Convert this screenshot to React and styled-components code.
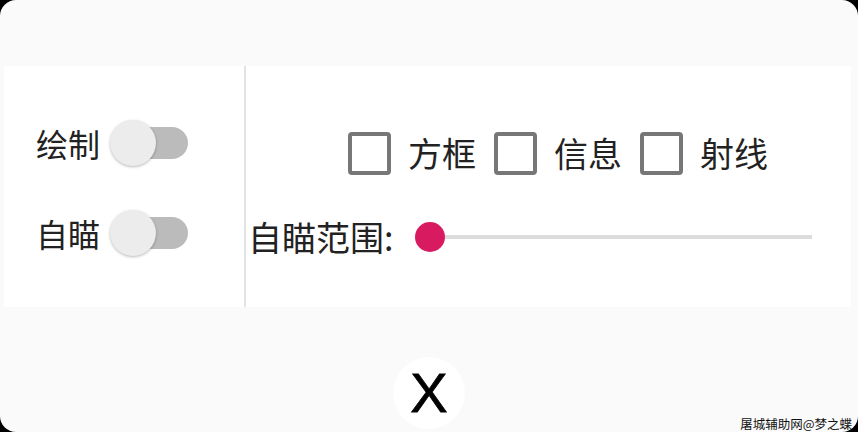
import React, { useState } from 'react';
import styled, { createGlobalStyle } from 'styled-components';

const GlobalStyle = createGlobalStyle`
  html, body {
    margin: 0;
    padding: 0;
    background: #000;
  }
  body {
    font-family: "Noto Sans CJK SC", "Noto Sans", sans-serif;
  }
`;

const Screen = styled.div`
  position: relative;
  width: 858px;
  height: 432px;
  background: #fafafa;
  border-radius: 16px;
  overflow: hidden;
  display: flex;
  flex-direction: column;
  align-items: center;
`;

const Panel = styled.div`
  margin: 66px 7px 0 4px;
  align-self: stretch;
  height: 241px;
  background: #fff;
  display: flex;
`;

const SideColumn = styled.div`
  width: 242px;
  border-right: 2px solid #e3e3e3;
  display: flex;
  flex-direction: column;
  gap: 42px;
  padding: 53px 0 0 32px;
  box-sizing: border-box;
`;

const MainColumn = styled.div`
  flex: 1;
  display: flex;
  flex-direction: column;
  padding: 65px 0 0 2px;
`;

const Row = styled.div`
  display: flex;
  align-items: center;
  height: 48px;
`;

const Label = styled.span`
  font-size: ${p => p.$size || 32}px;
  line-height: 1;
  color: #222;
  white-space: nowrap;
`;

const SwitchTrack = styled.button`
  position: relative;
  width: 78px;
  height: 48px;
  margin-left: 10px;
  padding: 0;
  border: 0;
  background: transparent;

  &::before {
    content: '';
    position: absolute;
    left: 10px;
    right: 0;
    top: 8px;
    height: 32px;
    border-radius: 16px;
    background: ${p => (p.$on ? '#f48fb1' : '#bbbbbb')};
  }

  &::after {
    content: '';
    position: absolute;
    top: 1px;
    left: ${p => (p.$on ? '32px' : '0')};
    width: 46px;
    height: 46px;
    border-radius: 50%;
    background: ${p => (p.$on ? '#d81b60' : '#ececec')};
    box-shadow: 0 1px 3px rgba(0, 0, 0, 0.28);
  }
`;

const CheckRow = styled.div`
  display: flex;
  align-items: center;
  height: 44px;
  padding-left: 100px;
`;

const CheckItem = styled.label`
  display: flex;
  align-items: center;
  gap: 17px;
  margin-right: 18px;
`;

const Box = styled.span`
  width: 43px;
  height: 43px;
  box-sizing: border-box;
  border: 4px solid #777;
  border-radius: 4px;
  background: ${p => (p.$on ? '#777' : 'transparent')};
`;

const CheckText = styled.span`
  font-size: 34px;
  line-height: 1;
  color: #222;
`;

const SliderRow = styled.div`
  display: flex;
  align-items: center;
  height: 40px;
  margin-top: 42px;
`;

const SliderTrack = styled.div`
  position: relative;
  width: 382px;
  height: 4px;
  margin-left: 37px;
  background: #dcdcdc;
`;

const SliderThumb = styled.span`
  position: absolute;
  top: 50%;
  width: 30px;
  height: 30px;
  margin: -15px 0 0 -15px;
  border-radius: 50%;
  background: #d81b60;
`;

const CloseButton = styled.button`
  margin-top: 50px;
  width: 72px;
  height: 72px;
  border: 0;
  border-radius: 50%;
  background: #fff;
  padding: 0;
  font-family: "Liberation Sans", Arial, sans-serif;
  font-size: 56px;
  font-weight: 400;
  line-height: 72px;
  color: #000;
  -webkit-text-stroke: 0.8px #000;
`;

const Watermark = styled.span`
  position: absolute;
  right: 6px;
  bottom: 2px;
  font-size: 12.5px;
  line-height: 1;
  color: #111;
  white-space: nowrap;
`;

const Toggle = ({ label }) => {
  const [on, setOn] = useState(false);
  return (
    <Row>
      <Label>{label}</Label>
      <SwitchTrack $on={on} onClick={() => setOn(!on)} />
    </Row>
  );
};

const Check = ({ label }) => {
  const [on, setOn] = useState(false);
  return (
    <CheckItem onClick={() => setOn(!on)}>
      <Box $on={on} />
      <CheckText>{label}</CheckText>
    </CheckItem>
  );
};

export default function App() {
  const range = 0;
  return (
    <>
      <GlobalStyle />
      <Screen>
        <Panel>
          <SideColumn>
            <Toggle label="绘制" />
            <Toggle label="自瞄" />
          </SideColumn>
          <MainColumn>
            <CheckRow>
              <Check label="方框" />
              <Check label="信息" />
              <Check label="射线" />
            </CheckRow>
            <SliderRow>
              <Label $size={34}>自瞄范围:</Label>
              <SliderTrack>
                <SliderThumb style={{ left: `${range}%` }} />
              </SliderTrack>
            </SliderRow>
          </MainColumn>
        </Panel>
        <CloseButton>X</CloseButton>
        <Watermark>屠城辅助网@梦之蝶</Watermark>
      </Screen>
    </>
  );
}
